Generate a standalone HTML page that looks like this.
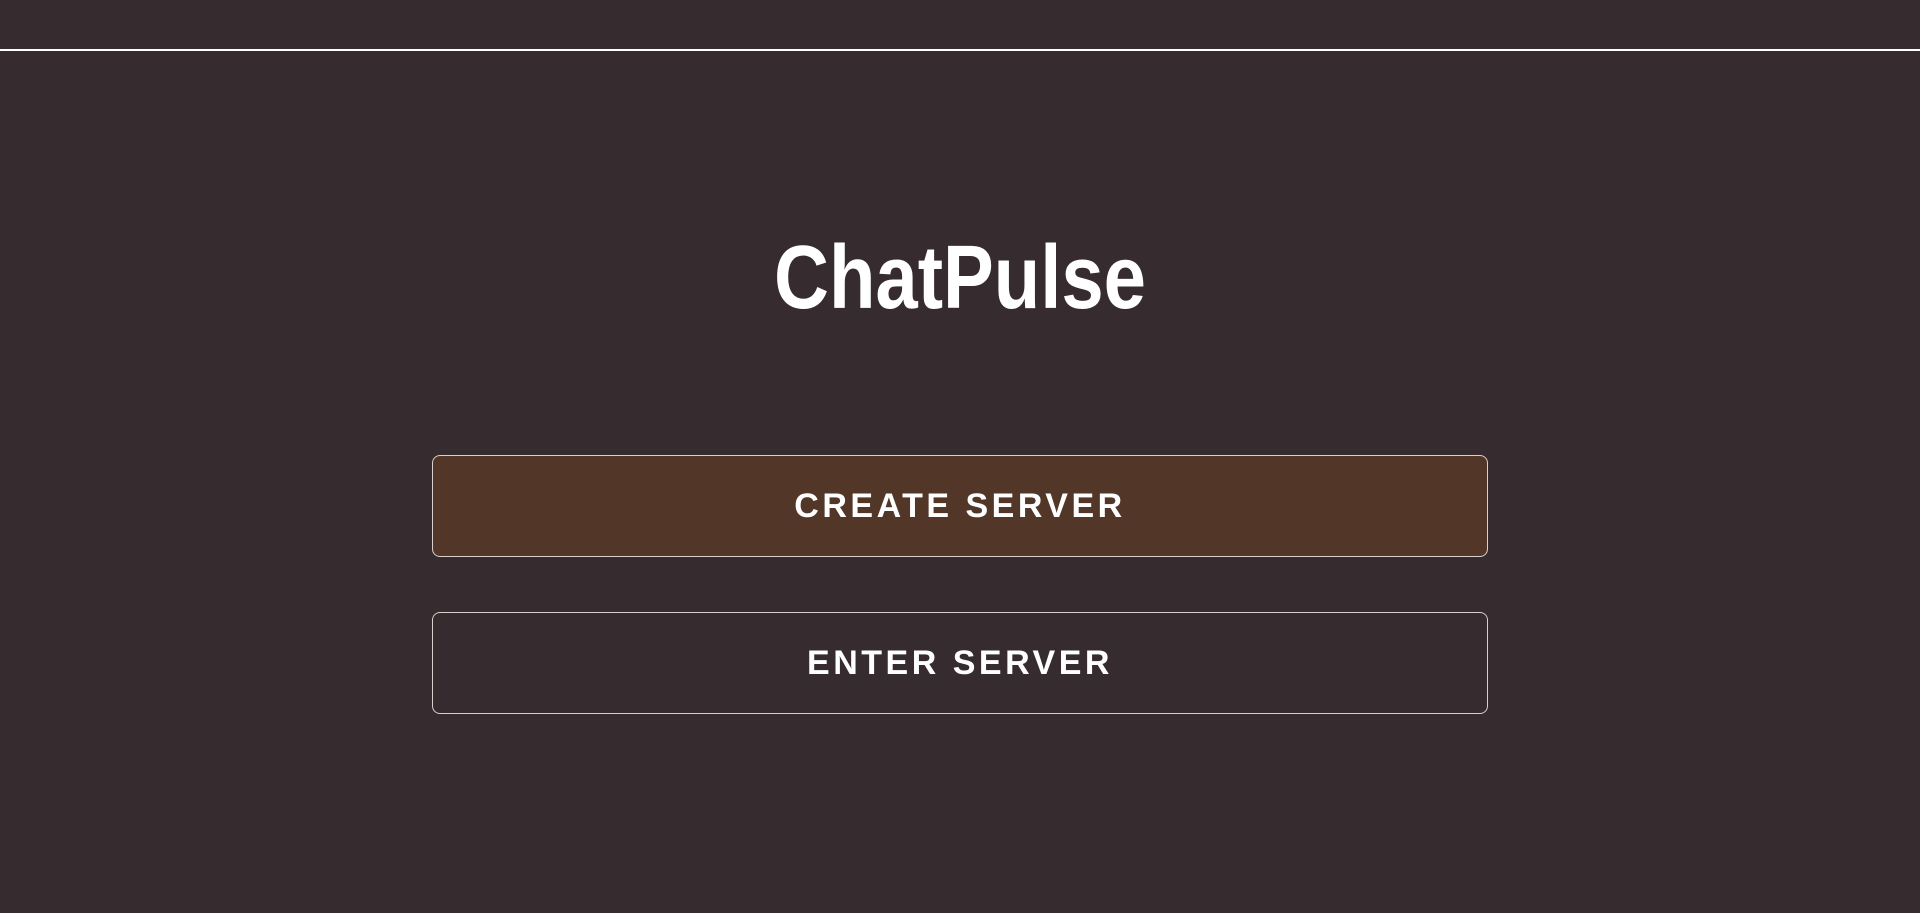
<!DOCTYPE html>
<html><head><style>
html,body{margin:0;padding:0;background:#362b2f;width:1920px;height:913px;overflow:hidden}
.line{position:absolute;left:0;top:49px;width:1920px;height:2px;background:#fff}
h1{position:absolute;left:0;width:1920px;top:222px;margin:0;text-align:center;color:#fff;font-family:"Liberation Sans",sans-serif;font-weight:bold;font-size:90px;line-height:112px;transform:scaleX(0.845)}
.btn{position:absolute;left:432px;width:1054px;height:100px;border:1px solid #d8d0cc;border-radius:8px;color:#fff;font-family:"Liberation Sans",sans-serif;font-weight:bold;font-size:34px;letter-spacing:3.5px;text-align:center;line-height:100px}
.b1{top:455px;background:#523729}
.b2{top:612px;background:#362b2f}
</style></head><body>
<div class="line"></div>
<h1>ChatPulse</h1>
<div class="btn b1">CREATE SERVER</div>
<div class="btn b2">ENTER SERVER</div>
</body></html>
